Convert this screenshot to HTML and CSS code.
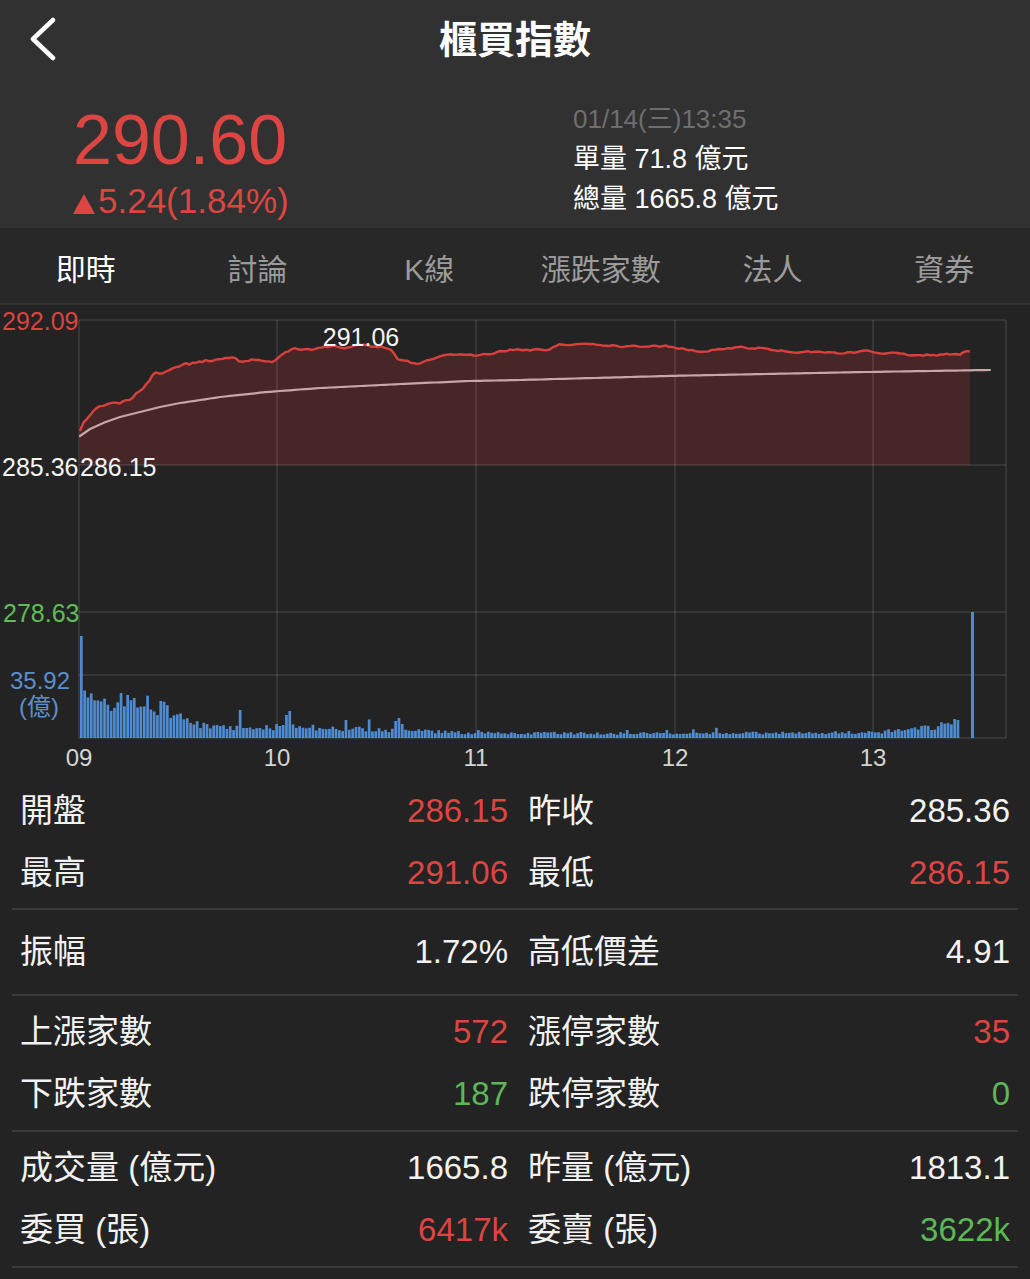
FILE: index.html
```html
<!DOCTYPE html>
<html>
<head>
  <meta charset="UTF-8" />
  <title>櫃買指數</title>
  <link rel="stylesheet" href="styles.css">
</head>
<body>

  <!-- Header: title + quote -->
  <div class="header">
    <div class="nav">
      <svg class="back" viewBox="0 0 30 46" width="30" height="46">
        <path d="M25 3 L5 22 L25 41" />
      </svg>
      <h1>櫃買指數</h1>
      <span></span>
    </div>
    <div class="quote">
      <div class="quote-main">
        <div class="price up">290.60</div>
        <div class="change up"><svg class="tri" viewBox="0 0 22 20" width="22" height="20"><path d="M11 0 L22 20 L0 20 Z" /></svg>5.24(1.84%)</div>
      </div>
      <div class="quote-side">
        <div class="time">01/14(三)13:35</div>
        <div>單量 71.8 億元</div>
        <div>總量 1665.8 億元</div>
      </div>
    </div>
  </div>

  <!-- Tabs -->
  <div class="tabs">
    <div class="tab active">即時</div>
    <div class="tab">討論</div>
    <div class="tab">K線</div>
    <div class="tab">漲跌家數</div>
    <div class="tab">法人</div>
    <div class="tab">資券</div>
  </div>

  <!-- Intraday chart -->
  <div class="chart">
    <svg id="chart" viewBox="0 307 1030 471" width="1030" height="471">
      <g id="area"></g>
      <g class="grid">
        <line x1="79" y1="322" x2="1006" y2="322" />
        <line x1="79" y1="467" x2="1006" y2="467" />
        <line x1="79" y1="614" x2="1006" y2="614" />
        <line x1="79" y1="677" x2="1006" y2="677" />
        <line x1="79" y1="740" x2="1006" y2="740" />
        <line x1="79" y1="322" x2="79" y2="740" />
        <line x1="277" y1="322" x2="277" y2="740" />
        <line x1="476" y1="322" x2="476" y2="740" />
        <line x1="675" y1="322" x2="675" y2="740" />
        <line x1="873" y1="322" x2="873" y2="740" />
        <line x1="1006" y1="322" x2="1006" y2="740" />
      </g>
      <g id="lines"></g>
      <g id="bars"></g>
      <g class="labels">
        <text class="lbl-up" x="2" y="332">292.09</text>
        <text class="lbl" x="2" y="478">285.36</text>
        <text class="lbl" x="80" y="478">286.15</text>
        <text class="lbl" x="361" y="348" text-anchor="middle">291.06</text>
        <text class="lbl-down" x="3" y="624">278.63</text>
        <text class="lbl-vol" x="40" y="691" text-anchor="middle">35.92</text>
        <text class="lbl-vol" x="39" y="717" text-anchor="middle">(億)</text>
        <text class="lbl-x" x="79" y="768" text-anchor="middle">09</text>
        <text class="lbl-x" x="277" y="768" text-anchor="middle">10</text>
        <text class="lbl-x" x="476" y="768" text-anchor="middle">11</text>
        <text class="lbl-x" x="675" y="768" text-anchor="middle">12</text>
        <text class="lbl-x" x="873" y="768" text-anchor="middle">13</text>
      </g>
    </svg>
  </div>

  <!-- Stats -->
  <div class="stats">
    <div class="group first">
      <div class="row">
        <div class="cell"><span>開盤</span><span class="up">286.15</span></div>
        <div class="cell"><span>昨收</span><span>285.36</span></div>
      </div>
      <div class="row">
        <div class="cell"><span>最高</span><span class="up">291.06</span></div>
        <div class="cell"><span>最低</span><span class="up">286.15</span></div>
      </div>
    </div>
    <div class="group single">
      <div class="row">
        <div class="cell"><span>振幅</span><span>1.72%</span></div>
        <div class="cell"><span>高低價差</span><span>4.91</span></div>
      </div>
    </div>
    <div class="group">
      <div class="row">
        <div class="cell"><span>上漲家數</span><span class="up">572</span></div>
        <div class="cell"><span>漲停家數</span><span class="up">35</span></div>
      </div>
      <div class="row">
        <div class="cell"><span>下跌家數</span><span class="down">187</span></div>
        <div class="cell"><span>跌停家數</span><span class="down">0</span></div>
      </div>
    </div>
    <div class="group">
      <div class="row">
        <div class="cell"><span>成交量 (億元)</span><span>1665.8</span></div>
        <div class="cell"><span>昨量 (億元)</span><span>1813.1</span></div>
      </div>
      <div class="row">
        <div class="cell"><span>委買 (張)</span><span class="up">6417k</span></div>
        <div class="cell"><span>委賣 (張)</span><span class="down">3622k</span></div>
      </div>
    </div>
  </div>

  <script src="chart.js"></script>
</body>
</html>
```

FILE: styles.css
```css
body {
  margin: 0;
  width: 1030px;
  background: #232323;
  color: #f2f2f2;
  font-family: 'Liberation Sans', 'Noto Sans CJK TC', sans-serif;
}

.up {
  color: #dc4541;
}

.down {
  color: #5cb857;
}

/* header */
.header {
  background: #313131;
  height: 228px;
}

.nav {
  display: grid;
  grid-template-columns: 1fr auto 1fr;
  align-items: center;
  height: 80px;
}

.back {
  display: block;
  margin-left: 28px;
}

.back path {
  fill: none;
  stroke: #fff;
  stroke-width: 4.5;
  stroke-linecap: round;
  stroke-linejoin: round;
}

.nav h1 {
  margin: 0;
  font-size: 38px;
  font-weight: 700;
  line-height: 80px;
  color: #fff;
}

.quote {
  display: flex;
}

.quote-main {
  width: 573px;
  box-sizing: border-box;
  padding: 20px 0 0 73px;
}

.price {
  font-size: 70px;
  line-height: 80px;
}

.change {
  font-size: 35px;
  line-height: 40px;
  margin-top: 1px;
}

.tri {
  fill: #dc4541;
  margin-right: 3px;
  vertical-align: -1px;
}

.quote-side {
  padding-top: 19px;
  font-size: 27px;
  line-height: 40px;
  color: #fff;
}

.quote-side .time {
  font-size: 26px;
  color: #6e6e6e;
}

/* tabs */
.tabs {
  display: grid;
  grid-template-columns: repeat(6, 1fr);
  align-items: center;
  height: 75px;
  background: #282828;
  border-bottom: 2px solid #313131;
}

.tab {
  text-align: center;
  font-size: 30px;
  padding-top: 2px;
  color: #9b9b9b;
}

.tab.active {
  color: #fff;
}

/* chart */
.chart svg {
  display: block;
}

.grid line {
  stroke: rgba(255, 255, 255, 0.12);
  stroke-width: 1.5;
}

.area {
  fill: #472628;
}

.price-line {
  fill: none;
  stroke: #d9403d;
  stroke-width: 2.4;
  stroke-linejoin: round;
}

.avg-line {
  fill: none;
  stroke: #c6a6a8;
  stroke-width: 2.2;
  stroke-linecap: round;
}

.bar {
  fill: #4f8bd0;
}

.labels text {
  font-family: 'Liberation Sans', 'Noto Sans CJK TC', sans-serif;
  font-size: 25px;
}

.lbl {
  fill: #f4f4f4;
}

.lbl-up {
  fill: #d9443f;
}

.lbl-down {
  fill: #5fbd55;
}

.labels .lbl-vol {
  fill: #5a8fcf;
  font-size: 24px;
}

.labels .lbl-x {
  fill: #d4d4d4;
  font-size: 24px;
}

/* stats */
.group {
  margin: 0 12px;
  padding: 5px 8px;
  border-bottom: 2px solid #3a3a3a;
}

.group.first {
  padding: 4px 8px;
}

.group.single {
  padding: 11px 8px;
}

.row {
  display: grid;
  grid-template-columns: 488px 1fr;
  column-gap: 20px;
  height: 62px;
  font-size: 33px;
  line-height: 62px;
}

.cell {
  display: flex;
  justify-content: space-between;
  white-space: nowrap;
}
```

FILE: chart.js
```js
// draws intraday price, average line and volume bars
(function () {
  var NS = 'http://www.w3.org/2000/svg';
  var X0 = 80, STEP = 3.308;

  var seed = 20250114;
  function rnd() {
    seed = (seed * 16807) % 2147483647;
    return seed / 2147483647;
  }

  function lerp(pts, x) {
    for (var i = 1; i < pts.length; i++) {
      if (x <= pts[i][0]) {
        var a = pts[i - 1], b = pts[i];
        return a[1] + (b[1] - a[1]) * (x - a[0]) / (b[0] - a[0]);
      }
    }
    return pts[pts.length - 1][1];
  }

  function el(name, attrs, parent) {
    var node = document.createElementNS(NS, name);
    for (var k in attrs) node.setAttribute(k, attrs[k]);
    parent.appendChild(node);
    return node;
  }

  var pricePts = [[80,433],[85,422],[100,407],[113,403],[130,403],[140,393],[153,377],[180,368],
    [200,365],[227,360],[240,363],[260,360],[270,365],[293,352],[313,352],[333,348],[347,350],
    [360,346],[390,350],[398,362],[407,363],[417,367],[447,357],[480,357],[510,352],[547,352],
    [560,347],[613,347],[620,349],[667,348],[700,353],[733,350],[767,350],[783,353],[840,355],
    [867,353],[907,357],[930,357],[960,356],[968,353]];

  var avgPts = [[80,438],[90,431],[103,425],[120,419],[140,414],[160,409],[180,405],[220,399],
    [267,394],[320,390],[400,386],[470,383],[520,382],[667,378],[867,374],[990,372]];

  var volPts = [[80,40],[110,37],[146,35],[167,27],[185,18],[200,13],[238,11],[277,11],
    [320,10],[360,9],[400,8],[440,6],[476,5],[675,4.5],[873,5.5],[900,8],[930,11],[958,16]];

  // price line
  var line = [], n = 0;
  for (var i = 0; i <= 269; i++) {
    var x = X0 + i * STEP;
    var amp = x < 300 ? 3.4 : 1.8;
    n = n * 0.5 + (rnd() - 0.5) * amp;
    var y = lerp(pricePts, x) + (i === 0 ? 0 : n);
    line.push(x.toFixed(1) + ' ' + y.toFixed(1));
  }
  var d = 'M' + line.join(' L');
  var lastX = (X0 + 269 * STEP).toFixed(1);
  el('path', { d: d + ' L' + lastX + ' 467 L80 467 Z', 'class': 'area' }, document.getElementById('area'));

  var lines = document.getElementById('lines');
  var avg = [];
  for (var ax = 80; ax <= 990; ax += 5) {
    avg.push(ax + ' ' + lerp(avgPts, ax).toFixed(1));
  }
  el('path', { d: 'M' + avg.join(' L'), 'class': 'avg-line' }, lines);
  el('path', { d: d, 'class': 'price-line' }, lines);

  // volume
  var bars = document.getElementById('bars');
  var spikes = { 14: 43, 16: 40, 48: 28, 63: 27, 80: 18, 95: 17, 96: 20, 97: 14, 120: 8, 165: 8, 265: 18 };
  for (var j = 0; j <= 265; j++) {
    var bx = X0 + j * STEP;
    var h;
    if (j === 0) h = 102;
    else if (spikes[j]) h = spikes[j];
    else {
      h = lerp(volPts, bx) * (0.7 + rnd() * 0.6);
      if (rnd() < 0.04) h *= 1.8;
    }
    el('rect', { x: bx.toFixed(1), y: (740 - h).toFixed(1), width: 2.7, height: h.toFixed(1), 'class': 'bar' }, bars);
  }
  el('rect', { x: 971, y: 614, width: 3, height: 126, 'class': 'bar' }, bars);
})();
```
